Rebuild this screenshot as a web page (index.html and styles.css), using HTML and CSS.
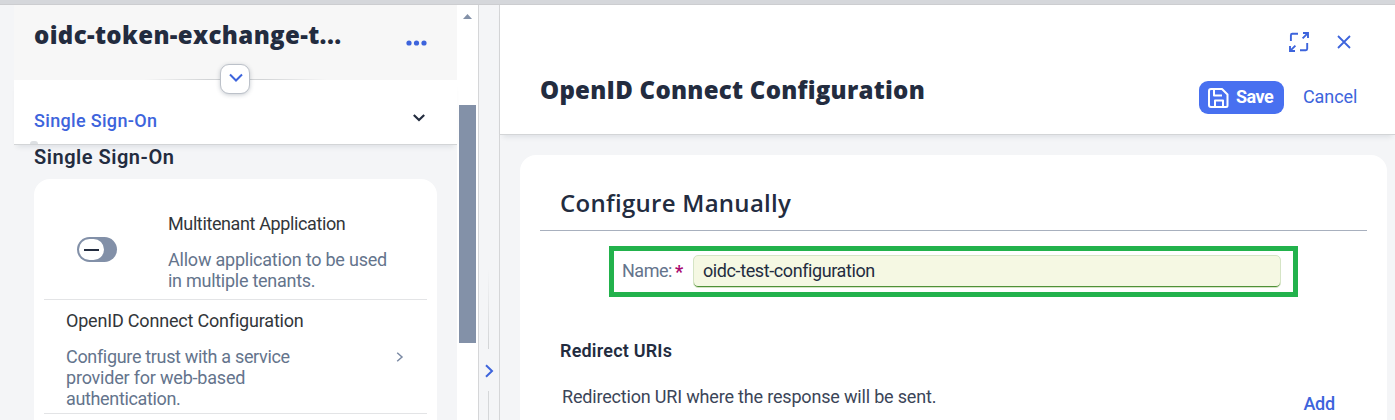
FILE: index.html
```
<!DOCTYPE html>
<html lang="en">
<head>
<meta charset="utf-8">
<title>OpenID Connect Configuration</title>
<link rel="stylesheet" href="styles.css">
</head>
<body>
<div class="topbar"></div>
<div class="shell">
  <aside class="side">
    <header class="side-head">
      <h1 class="app-title">oidc-token-exchange-t...</h1>
      <svg class="dots" width="22" height="6" viewBox="0 0 22 6" fill="#3d64dc"><circle cx="3" cy="3" r="2.6"/><circle cx="10.500" cy="3" r="2.6"/><circle cx="18" cy="3" r="2.6"/></svg>
      <div class="head-line"></div>
      <button class="expand"><svg width="14" height="10" viewBox="0 0 14 10" fill="none" stroke="#3d64dc" stroke-width="2"><path d="M1 1.5l6 6 6-6"/></svg></button>
    </header>
    <nav class="anchor-bar">
      <span class="anchor">Single Sign-On</span>
      <svg class="anchor-arrow" width="12" height="8" viewBox="0 0 12 8" fill="none" stroke="#232c3f" stroke-width="2.2"><path d="M.8 1l5.2 5 5.2-5"/></svg>
      <i class="anchor-mark"></i>
    </nav>
    <section class="side-body">
      <h2 class="side-title">Single Sign-On</h2>
      <div class="list">
        <div class="item item-switch">
          <div class="switch"><span class="knob"></span></div>
          <div class="item-text">
            <div class="label t-multi">Multitenant Application</div>
            <div class="desc"><span class="t-allow">Allow application to be used</span><br><span class="t-in">in multiple tenants.</span></div>
          </div>
        </div>
        <div class="item item-link">
          <div class="item-text">
            <div class="label t-open">OpenID Connect Configuration</div>
            <div class="desc"><span class="t-conf">Configure trust with a service</span><br><span class="t-prov">provider for web-based</span><br><span class="t-auth">authentication.</span></div>
          </div>
          <svg class="item-arrow" width="8" height="10" viewBox="0 0 8 10" fill="none" stroke="#7b8aa4" stroke-width="1.5"><path d="M1.2.8L6 5 1.2 9.2"/></svg>
        </div>
      </div>
    </section>
  </aside>
  <div class="scroll">
    <svg class="scroll-up" width="9" height="5" viewBox="0 0 9 5"><path d="M0 5L4.5 0 9 5z" fill="#8391a8"/></svg>
    <div class="thumb"></div>
  </div>
  <div class="splitter">
    <div class="rule rule-top"></div>
    <svg width="10" height="14" viewBox="0 0 10 14" fill="none" stroke="#3d64dc" stroke-width="2"><path d="M2 1.2L8 7l-6 5.8"/></svg>
    <div class="rule rule-bottom"></div>
  </div>
  <main class="main">
    <header class="main-head">
      <h1 class="page-title">OpenID Connect Configuration</h1>
      <div class="head-right">
        <div class="window-icons">
          <svg width="20" height="20" viewBox="0 0 20 20" fill="none" stroke="#3d64dc" stroke-width="1.9"><path d="M1.9 9V3.2q0-1.400 1.400-1.400H9M11 18.200h5.800q1.400 0 1.400-1.400V11M13.600 6.400l5-5M14 1h5v5M6.400 13.600l-5 5M1 14v5h5"/></svg>
          <svg width="14" height="14" viewBox="0 0 14 14" fill="none" stroke="#3d64dc" stroke-width="1.8"><path d="M1 1l12 12M13 1L1 13"/></svg>
        </div>
        <div class="actions">
          <button class="save"><svg width="22" height="20" viewBox="0 0 22 20" fill="none" stroke="#fff" stroke-width="2" stroke-linejoin="round"><path d="M4 1H15l5.500 5.500v11q0 1.500-1.500 1.500H4Q2 19 2 17V3Q2 1 4 1zM7 1v6.500h8M8 19v-6.500h8V19"/></svg><span>Save</span></button>
          <span class="cancel">Cancel</span>
        </div>
      </div>
    </header>
    <section class="card">
      <h2 class="card-title">Configure Manually</h2>
      <div class="field">
        <label class="name">Name:</label><span class="required">*</span>
        <div class="input"><span>oidc-test-configuration</span></div>
      </div>
      <h3 class="sub-title">Redirect URIs</h3>
      <div class="redirect">
        <p class="hint">Redirection URI where the response will be sent.</p>
        <span class="add">Add</span>
      </div>
    </section>
  </main>
</div>
</body>
</html>
```

FILE: styles.css
```
* { box-sizing: border-box; }
html, body { margin: 0; height: 420px; overflow: hidden; }
body {
  font-family: Roboto, "Liberation Sans", sans-serif;
  font-size: 18px;
  line-height: 21px;
  color: #232c3f;
  background: #f4f5f7;
}
h1, h2, h3, p { margin: 0; }
button { border: 0; padding: 0; font: inherit; }
svg { display: block; flex: none; }

.topbar { height: 5px; background: #d5d7db; border-bottom: 1px solid #cccdd0; }
.shell { display: flex; height: 415px; padding-left: 14px; }

/* Left panel */
.side { width: 443px; flex: none; display: flex; flex-direction: column; }
.side-head {
  position: relative;
  z-index: 2;
  height: 75px;
  flex: none;
  background: #f7f7f7;
  display: flex;
  justify-content: space-between;
  padding: 14px 29px 0 20px;
}
.app-title, .page-title {
  font: 800 24px/32px "Open Sans", "Noto Sans", sans-serif;
  letter-spacing: .37px;
  white-space: nowrap;
}
.dots { margin-top: 21px; }
.head-line {
  position: absolute;
  left: 130px;
  right: 130px;
  bottom: 0;
  height: 1px;
  background: linear-gradient(90deg, transparent, #d2d4d6 35%, #d2d4d6 65%, transparent);
}
.expand {
  position: absolute;
  left: 206px;
  top: 59px;
  width: 30px;
  height: 30px;
  border: 1px solid #bcc1c9;
  border-radius: 9px;
  background: #fff;
  box-shadow: 0 1px 4px rgba(34, 53, 72, .25);
  display: flex;
  align-items: center;
  justify-content: center;
  padding: 0 0 2px 1px;
}
.anchor-bar {
  position: relative;
  z-index: 1;
  height: 65px;
  flex: none;
  background: #fff;
  border-bottom: 1px solid #d3d5d7;
  box-shadow: 0 5px 5px -3px rgba(34, 53, 72, .1);
  display: flex;
  justify-content: space-between;
  align-items: flex-start;
  padding: 30px 32px 0 20px;
}
.anchor { color: #3d64dc; font-weight: 500; letter-spacing: .33px; }
.anchor-arrow { margin-top: 4px; }
.anchor-mark {
  position: absolute;
  left: 16px;
  bottom: 0;
  width: 8px;
  height: 3px;
  border-radius: 3px 3px 0 0;
  background: #dde0e3;
}
.side-body { padding: 0 20px; flex: 1; }
.side-title { font: 600 20px/24px Roboto, sans-serif; letter-spacing: .52px; }
.list {
  margin-top: 10px;
  height: 260px;
  padding: 0 10px;
  background: #fff;
  border-radius: 16px 16px 0 0;
}
.item { display: flex; border-bottom: 1px solid #e3e4e6; }
.item-switch { height: 121px; padding: 34px 0 0 33px; }
.switch {
  width: 40px;
  height: 25px;
  margin-top: 24px;
  padding: 2px;
  border-radius: 13px;
  background: #8290a8;
}
.knob {
  display: flex;
  align-items: center;
  justify-content: center;
  width: 25px;
  height: 21px;
  border-radius: 11px;
  background: #fff;
}
.knob::before { content: ""; width: 15px; height: 2px; background: #232c3f; }
.item-switch .item-text { margin-left: 51px; }
.item-link { height: 114px; padding: 10px 23px 0 22px; justify-content: space-between; }
.item-arrow { margin-top: 42px; }
.item-text { white-space: nowrap; }
.label { color: #32363a; }
.desc { color: #64748c; margin-top: 15px; }
.t-multi { letter-spacing: -.38px; }
.t-allow { letter-spacing: -.22px; }
.t-in { letter-spacing: -.27px; }
.t-open { letter-spacing: -.19px; }
.t-conf { letter-spacing: -.33px; }
.t-prov { letter-spacing: -.2px; }
.t-auth { letter-spacing: -.35px; }

/* Scrollbar and pane splitter */
.scroll { width: 21px; flex: none; background: #fff; padding: 9px 2px 0; }
.scroll-up { margin-left: 4px; }
.thumb { height: 238px; margin-top: 86px; background: #8391a8; }
.splitter {
  width: 22px;
  flex: none;
  border: solid #d5d6d8;
  border-width: 0 1px;
  display: flex;
  flex-direction: column;
  align-items: center;
  padding-right: 1px;
}
.rule { width: 1px; background: #d5d7d9; }
.rule-top { height: 80px; margin: 264px 0 15px; background: linear-gradient(transparent, #d2d4d6); }
.rule-bottom { flex: 1; margin-top: 13px; }

/* Detail page */
.main { flex: 1; }
.main-head {
  height: 130px;
  background: #fff;
  border-bottom: 1px solid #d3d5d7;
  box-shadow: 0 5px 5px -3px rgba(34, 53, 72, .1);
  display: flex;
  justify-content: space-between;
  padding-left: 40px;
}
.page-title { margin-top: 69px; letter-spacing: .27px; }
.head-right { width: 196px; padding-top: 27px; }
.window-icons { display: flex; align-items: center; gap: 28px; padding-left: 90px; }
.actions { display: flex; align-items: center; gap: 19px; margin-top: 29px; }
.save {
  display: flex;
  align-items: center;
  width: 85px;
  height: 33px;
  padding-left: 8px;
  gap: 7px;
  border-radius: 9px;
  background: #4870f0;
  color: #fff;
  font-weight: 700;
  letter-spacing: -.5px;
}
.save span, .cancel { padding-bottom: 2px; }
.cancel { color: #3d64dc; letter-spacing: -.1px; }
.card {
  margin: 20px 8px 0 20px;
  height: 280px;
  padding: 0 20px;
  background: #fff;
  border-radius: 16px;
}
.card-title {
  height: 76px;
  padding: 32px 20px 0;
  border-bottom: 1px solid #a8b0be;
  font: 600 24px/32px "Open Sans", "Noto Sans", sans-serif;
  letter-spacing: .28px;
}
.field {
  display: flex;
  align-items: flex-start;
  width: 689px;
  height: 51px;
  margin: 15px 0 0 69px;
  padding: 4px 12px 0 8px;
  border: 5px solid #22b24c;
}
.name { width: 53px; margin-top: 5px; color: #64748c; letter-spacing: -.5px; }
.required { width: 18px; margin-top: 6px; color: #aa0a70; font-weight: 700; }
.input {
  flex: 1;
  height: 33px;
  padding: 4px 9px;
  border: 1px solid #d5e4c5;
  border-radius: 5px;
  background: #f5f8e3;
  box-shadow: inset 0 -1px #4f9138;
  letter-spacing: -.4px;
}
.sub-title { margin: 43px 0 0 20px; font: 600 18px/21px Roboto, sans-serif; letter-spacing: .2px; }
.redirect { display: flex; justify-content: space-between; padding: 25px 32px 0 22px; }
.hint { color: #3b4558; letter-spacing: -.18px; }
.add { margin-top: 7px; color: #3d64dc; font-weight: 500; letter-spacing: -.2px; }
```
